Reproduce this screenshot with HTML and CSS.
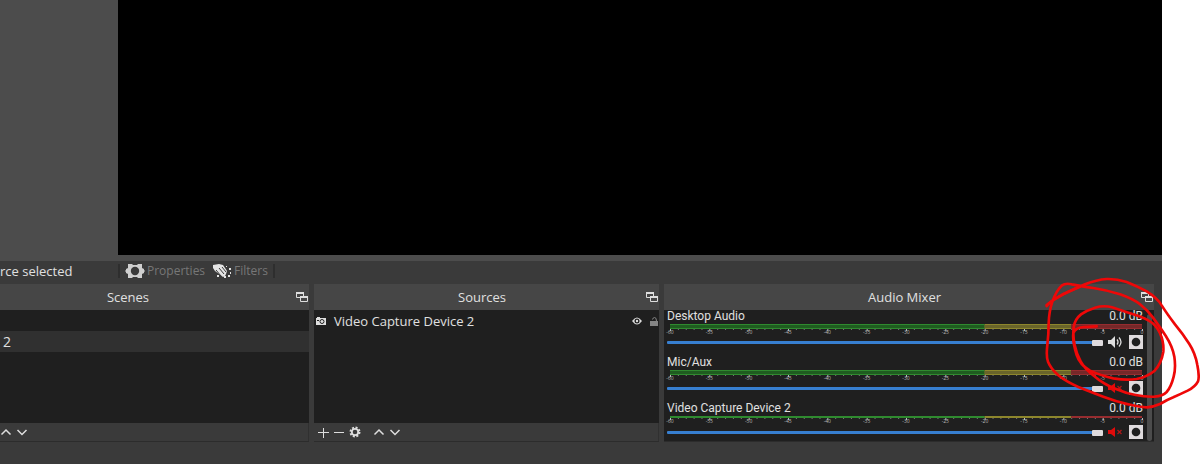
FILE: index.html
```html
<!DOCTYPE html>
<html lang="en">
  <head>
    <meta charset="utf-8">
    <title>OBS Studio</title>
    <link rel="stylesheet" href="styles.css">
  </head>
  <body>
    <svg class="symbols" aria-hidden="true">
      <symbol id="popout" viewBox="0 0 12 12">
        <path d="M.5 1.5h7v5h-7zM4.500 5.500h7v5h-7z" fill="#464646" stroke="#dedede"/>
        <path d="M0 1h8v2H0zM4 5h8v2H4z" fill="#dedede"/>
      </symbol>
      <symbol id="up" viewBox="0 0 12 12"><path d="M1.500 8.500 6 4l4.500 4.500"/></symbol>
      <symbol id="down" viewBox="0 0 12 12"><path d="M1.500 4 6 8.500 10.500 4"/></symbol>
      <symbol id="sound" viewBox="0 0 14 12">
        <path d="M0 4h3l4-4v12L3 8H0z" fill="#dedede"/>
        <path d="M9 3.500q2 2.500 0 5M11 1.500q4 4.500 0 9" fill="none" stroke="#dedede" stroke-width="1.300"/>
      </symbol>
      <symbol id="muted" viewBox="0 0 14 12">
        <path d="M0 4h3l4-3v10L3 8H0z" fill="#e00b0b"/>
        <path d="m9.500 4 4 4m0-4-4 4" stroke="#b01818" stroke-width="1.300"/>
      </symbol>
      <symbol id="settings" viewBox="0 0 14 14">
        <path d="M0 0h14v14H0z" fill="#dfdbdd"/>
        <circle cx="7" cy="7" r="4.300" fill="#1f1f1f"/>
      </symbol>
    </svg>

    <div class="app">
      <main class="preview"><div class="canvas"></div></main>

      <div class="toolbar">
        <span class="status">rce selected</span>
        <button class="tool first">
          <svg width="20" height="14" viewBox="0 0 20 14">
            <path d="M3 0h4l1 1h4l1-1h4v4l2 1v1l1 1-1 1v1l-2 1v4h-4l-1-1H8l-1 1H3v-4L1 9V8L0 7l1-1V5l2-1z" fill="#cfcfcf"/>
            <circle cx="10" cy="7" r="4.200" fill="#3a3a3a"/>
          </svg>
          Properties
        </button>
        <button class="tool last">
          <svg width="20" height="14" viewBox="0 0 20 14">
            <path d="M1 1 7 0l4 1 4 6-1 3-1 2-2 1-4-3-4-3-2-3z" fill="#e4e4e4"/>
            <path d="m7 4 5 6M10 3l4 5M4 6l5 6" stroke="#3a3a3a"/>
            <path d="M14 2h1v1h-1zM17 4h2v2h-2zM18 8h1v2h-1zM16 11h2v2h-2zM12 12h2v2h-2zM5 11h2v2H5z" fill="#e4e4e4"/>
          </svg>
          Filters
        </button>
      </div>

      <div class="docks">
        <section class="dock">
          <header><h2>Scenes</h2><button class="popout" aria-label="Undock scenes"><svg width="12" height="12"><use href="#popout"/></svg></button></header>
          <ul class="list scenes">
            <li></li>
            <li class="selected">2</li>
          </ul>
          <footer class="scene-actions">
            <button aria-label="Move scene up"><svg width="12" height="12"><use href="#up"/></svg></button>
            <button aria-label="Move scene down"><svg width="12" height="12"><use href="#down"/></svg></button>
          </footer>
        </section>

        <section class="dock">
          <header><h2>Sources</h2><button class="popout" aria-label="Undock sources"><svg width="12" height="12"><use href="#popout"/></svg></button></header>
          <ul class="list">
            <li class="source">
              <svg width="10" height="8" viewBox="0 0 10 8">
                <path d="M0 1h1V0h3v1h6v7H0z" fill="#dedede"/>
                <circle cx="6" cy="4.500" r="2" fill="none" stroke="#1f1f1f"/>
                <path d="M1 3h2v1H1z" fill="#1f1f1f"/>
              </svg>
              <span class="name">Video Capture Device 2</span>
              <button aria-label="Hide source">
                <svg width="10" height="8" viewBox="0 0 10 8">
                  <path d="M0 4q5-7 10 0-5 7-10 0z" fill="#dedede"/>
                  <circle cx="5" cy="4" r="2.500" fill="#1f1f1f"/>
                  <circle cx="5" cy="4" r="1.200" fill="#dedede"/>
                </svg>
              </button>
              <button aria-label="Lock source">
                <svg width="8" height="9" viewBox="0 0 8 9">
                  <path d="M0 4h8v5H0z" fill="#858585"/>
                  <path d="M2.500 2.500Q3 .5 4.500.5 6.500.5 6.500 4" fill="none" stroke="#858585"/>
                </svg>
              </button>
            </li>
          </ul>
          <footer>
            <button aria-label="Add source"><svg class="thin" width="12" height="12"><path d="M6.500 2v10M1 6.500h11"/></svg></button>
            <button aria-label="Remove source"><svg class="thin" width="12" height="12"><path d="M1 6.500h10"/></svg></button>
            <button aria-label="Source properties">
              <svg width="12" height="12">
                <circle cx="6" cy="6" r="4.500" stroke-width="2" stroke-dasharray="2 1.530"/>
                <circle cx="6" cy="6" r="3.200" stroke-width="1.800"/>
              </svg>
            </button>
            <button class="spaced" aria-label="Move source up"><svg width="12" height="12"><use href="#up"/></svg></button>
            <button aria-label="Move source down"><svg width="12" height="12"><use href="#down"/></svg></button>
          </footer>
        </section>

        <section class="dock mixer">
          <header><h2>Audio Mixer</h2><button class="popout" aria-label="Undock mixer"><svg width="12" height="12"><use href="#popout"/></svg></button></header>
          <div class="mixer-body">
            <div class="channels">
              <div class="channel">
                <div class="channel-head"><label for="desktop">Desktop Audio</label><span>0.0 dB</span></div>
                <svg class="meter"></svg>
                <div class="controls">
                  <input type="range" id="desktop" value="100">
                  <button aria-label="Mute"><svg width="14" height="12"><use href="#sound"/></svg></button>
                  <button aria-label="Settings"><svg width="14" height="14"><use href="#settings"/></svg></button>
                </div>
              </div>
              <div class="channel">
                <div class="channel-head"><label for="mic">Mic/Aux</label><span>0.0 dB</span></div>
                <svg class="meter"></svg>
                <div class="controls">
                  <input type="range" id="mic" value="100">
                  <button aria-label="Unmute"><svg width="14" height="12"><use href="#muted"/></svg></button>
                  <button aria-label="Settings"><svg width="14" height="14"><use href="#settings"/></svg></button>
                </div>
              </div>
              <div class="channel mono">
                <div class="channel-head"><label for="capture">Video Capture Device 2</label><span>0.0 dB</span></div>
                <svg class="meter"></svg>
                <div class="controls">
                  <input type="range" id="capture" value="100">
                  <button aria-label="Unmute"><svg width="14" height="12"><use href="#muted"/></svg></button>
                  <button aria-label="Settings"><svg width="14" height="14"><use href="#settings"/></svg></button>
                </div>
              </div>
            </div>
            <div class="scrollbar"></div>
          </div>
        </section>
      </div>
    </div>

    <!-- hand-drawn marker around the volume controls -->
    <svg class="marker" viewBox="0 0 900 582" aria-hidden="true">
      <path d="M440 108Q450 92 490 73Q530 53 555 43Q590 29 620 27Q650 26 680 36Q710 48 740 64Q772 84 785 106Q800 130 825 163Q850 193 868 222Q886 250 892 285Q899 320 894 334Q886 350 863 362Q840 373 820 382Q800 390 780 402Q760 411 740 412Q720 412 685 403Q650 395 610 380Q570 365 535 351Q500 336 475 316Q452 295 444 275Q438 260 442 225Q446 190 446 160Q447 125 457 95Q470 60 485 47Q497 38 515 43Q540 48 580 54Q620 60 660 73Q700 87 720 103Q742 120 759 143Q775 165 797 197Q818 230 823 260Q828 295 821 320Q813 352 800 366Q788 378 764 380Q735 381 707 375Q680 371 650 358Q610 342 585 320Q555 298 542 274Q529 250 524 225Q518 195 521 172Q524 148 543 133Q560 121 585 113Q612 105 636 112Q660 120 690 130Q725 141 745 151Q768 163 780 190Q792 215 790 245Q784 280 764 302Q742 320 710 327Q680 332 640 325Q600 316 570 302Q540 285 530 255Q517 215 520 190Q526 173 550 171L590 169"/>
      <path d="m440 105 20-15 30-18 50-22"/>
    </svg>
    <script src="meter.js"></script>
  </body>
</html>
```

FILE: styles.css
```css
* {
  box-sizing: border-box;
}

body {
  margin: 0;
  position: relative;
  background: #ffffff;
  color: #e0e0e0;
  font: 13px/18px "Open Sans", "Noto Sans", sans-serif;
}

.symbols {
  display: none;
}

.app {
  min-height: 100vh;
  margin-right: 38px;
  background: #3a3a3a;
}

svg {
  display: block;
  flex: none;
}

button {
  display: flex;
  padding: 0;
  border: 0;
  background: none;
  color: inherit;
  font: inherit;
}

.preview {
  padding: 0 0 6px 118px;
  background: #4c4c4c;
}

.canvas {
  height: 255px;
  background: #000000;
}

.toolbar {
  display: flex;
  align-items: center;
  height: 23px;
  padding-bottom: 4px;
}

.status {
  width: 118px;
}

.tool {
  align-items: center;
  gap: 2px;
  height: 14px;
  color: #777777;
  font-size: 12px;
}

.first {
  padding: 0 7px 0 5px;
  border-left: 2px solid #2e2e2e;
}

.last {
  padding-right: 5px;
  border-right: 2px solid #2e2e2e;
}

.docks {
  display: grid;
  grid-template-columns: 309fr 345fr 490fr;
  gap: 5px;
  padding-right: 8px;
}

.dock {
  display: flex;
  flex-direction: column;
  min-width: 0;
  height: 158px;
  border-bottom: 1px solid #2c2c2c;
  background: #1f1f1f;
}

.dock header {
  display: flex;
  flex: none;
  align-items: center;
  height: 26px;
  padding-right: 1px;
  background: #464646;
}

h2 {
  flex: 1;
  margin: 0;
  padding-left: 4px;
  font-size: 13px;
  font-weight: normal;
  text-align: center;
}

.dock:first-child h2 {
  padding: 0 40px 0 0;
}

.list {
  flex: 1;
  margin: 0;
  padding: 0;
  list-style: none;
}

.list li {
  height: 21px;
}

.scenes .selected {
  padding: 2px 3px;
  background: #303030;
  font-size: 14px;
}

.source {
  display: flex;
  align-items: center;
  gap: 8px;
  padding: 1px 1px 0 2px;
}

.name {
  flex: 1;
}

.dock footer {
  display: flex;
  align-items: center;
  gap: 4px;
  height: 18px;
  padding-left: 3px;
  border-right: 1px solid #303030;
  background: #3a3a3a;
}

.dock .scene-actions {
  padding-left: 0;
}

footer svg {
  fill: none;
  stroke: #dedede;
  stroke-width: 1.5px;
}

footer .thin {
  stroke-width: 1px;
}

.spaced {
  margin-left: 8px;
}

.mixer-body {
  display: flex;
  flex: 1;
  gap: 4px;
  padding: 0 2px 0 3px;
}

.channels {
  flex: 1;
  min-width: 0;
}

.channel {
  height: 46px;
}

.mono {
  height: 40px;
}

.channel-head {
  display: flex;
  justify-content: space-between;
  height: 14px;
  font-family: Roboto, "Open Sans", sans-serif;
  font-size: 12px;
  line-height: 13px;
}

.meter {
  width: 100%;
  height: 11px;
  padding: 0 1px 0 3px;
  overflow: visible;
}

.meter text {
  fill: #bdbdbd;
  font: 5px "Open Sans", sans-serif;
  text-anchor: middle;
}

.controls {
  display: flex;
  align-items: center;
  height: 14px;
}

.mono .controls {
  margin-top: -2px;
}

.controls button {
  margin-left: 5px;
}

.controls button:last-child {
  margin-left: 7px;
}

input[type="range"] {
  flex: 1;
  min-width: 0;
  height: 14px;
  margin: 0;
  appearance: none;
  background: none;
}

input[type="range"]::-webkit-slider-runnable-track {
  height: 3px;
  border-radius: 1px;
  background: #377fd0;
}

input[type="range"]::-webkit-slider-thumb {
  appearance: none;
  width: 11px;
  height: 6px;
  margin-top: -1px;
  border-radius: 1px;
  background: #dfdbdd;
}

.scrollbar {
  width: 5px;
  margin: 4px 0 1px;
  border-radius: 3px;
  background: #4c4c4c;
}

.marker {
  position: absolute;
  top: 270px;
  right: 0;
  width: 300px;
  height: 194px;
  fill: none;
  stroke: #ee0808;
  stroke-width: 8px;
  stroke-linecap: round;
}
```

FILE: meter.js
```js
const zones = [
  [-60, -20, "#2f8a2f", "#1f5c20"],
  [-20, -9, "#8d862c", "#69642a"],
  [-9, 0, "#962c2f", "#752829"],
];

function percent(db) {
  return ((db + 60) / 60) * 100 + "%";
}

document.querySelectorAll(".meter").forEach((meter) => {
  const mono = meter.closest(".mono");
  let content = "";
  for (const [from, to, edge, middle] of zones) {
    const width = ((to - from) / 60) * 100 + "%";
    content += `<rect x="${percent(from)}" width="${width}" height="${mono ? 2 : 5}" fill="${edge}"/>`;
    if (!mono) {
      content += `<rect x="${percent(from)}" y="1" width="${width}" height="3" fill="${middle}"/>`;
    }
  }
  const top = mono ? 2 : 5;
  for (let db = -60; db <= 0; db++) {
    const major = db % 5 === 0;
    content += `<rect x="${percent(db)}" y="${top}" width="1" height="${major ? 2 : 1}" fill="${major ? "#bbbbbb" : "#777777"}"/>`;
    if (major) {
      content += `<text x="${percent(db)}" y="${top + 5}">${db}</text>`;
    }
  }
  meter.innerHTML = content;
});
```
